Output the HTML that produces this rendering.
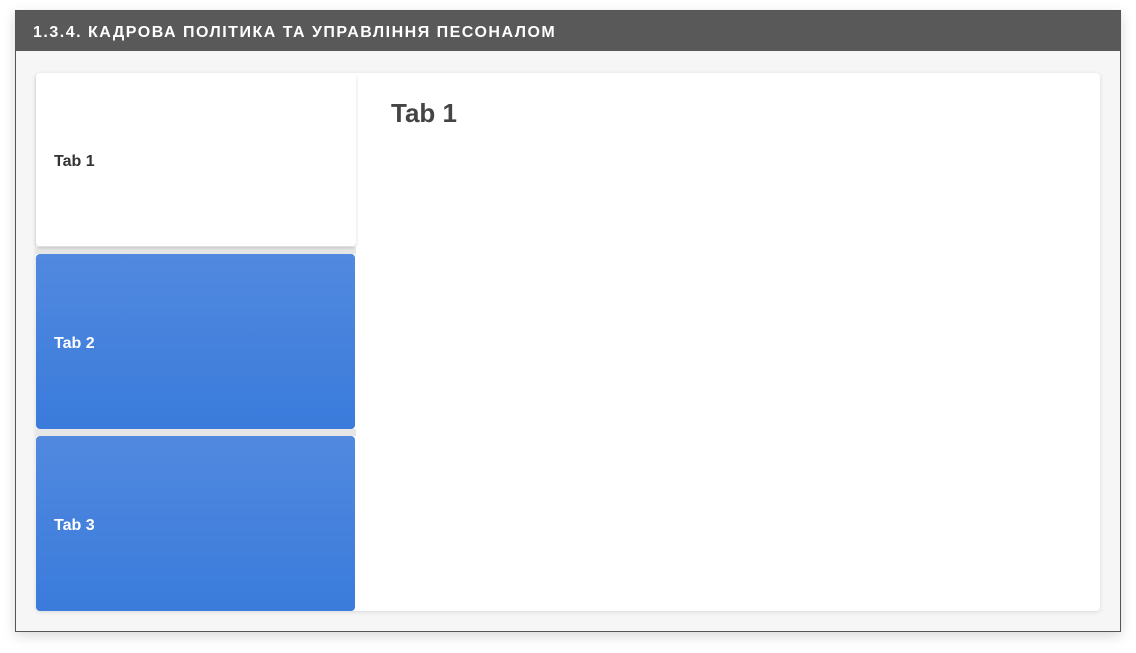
<!DOCTYPE html>
<html><head><meta charset="utf-8"><style>
body{margin:0;background:#fff;width:1136px;height:653px;position:relative;font-family:"Liberation Sans",sans-serif;overflow:hidden}
.box{position:absolute;left:15px;top:10px;width:1106px;height:622px;background:#f6f6f6;border:1px solid #555;box-sizing:border-box;box-shadow:0 4px 12px rgba(0,0,0,.15)}
.hd{position:absolute;left:0;top:0;right:0;height:40px;background:#595959;color:#fff;font-weight:bold;font-size:16px;letter-spacing:1.5px;line-height:43px;padding-left:17px}
.card{position:absolute;left:20px;top:62px;width:1064px;height:538px;background:#fff;border-radius:4px;box-shadow:0 1px 4px rgba(0,0,0,.12)}
.tab{position:absolute;left:0;width:320px;font-weight:bold;font-size:16px;box-sizing:border-box;padding-left:18px;padding-top:4px;display:flex;align-items:center;border-radius:4px}
.t1{top:0;height:173px;color:#333;background:#fff;box-shadow:0 2px 3px rgba(0,0,0,.15)}
.t2{top:181px;height:175px;color:#fff;background:linear-gradient(#5189df,#3a7bdb);width:319px}
.t3{top:363px;height:175px;color:#fff;background:linear-gradient(#5189df,#3a7bdb);width:319px}
.sep{position:absolute;left:0;top:174px;width:320px;height:7px;background:#e6e6e6}
.sep2{position:absolute;left:0;top:356px;width:320px;height:7px;background:#e6e6e6}
h1{position:absolute;left:355px;top:25px;margin:0;font-size:26px;color:#444}
</style></head><body>
<div class="box">
<div class="hd">1.3.4. КАДРОВА ПОЛІТИКА ТА УПРАВЛІННЯ ПЕСОНАЛОМ</div>
<div class="card">
<div class="sep"></div><div class="sep2"></div>
<div class="tab t1">Tab 1</div>
<div class="tab t2">Tab 2</div>
<div class="tab t3">Tab 3</div>
<h1>Tab 1</h1>
</div>
</div>
</body></html>
